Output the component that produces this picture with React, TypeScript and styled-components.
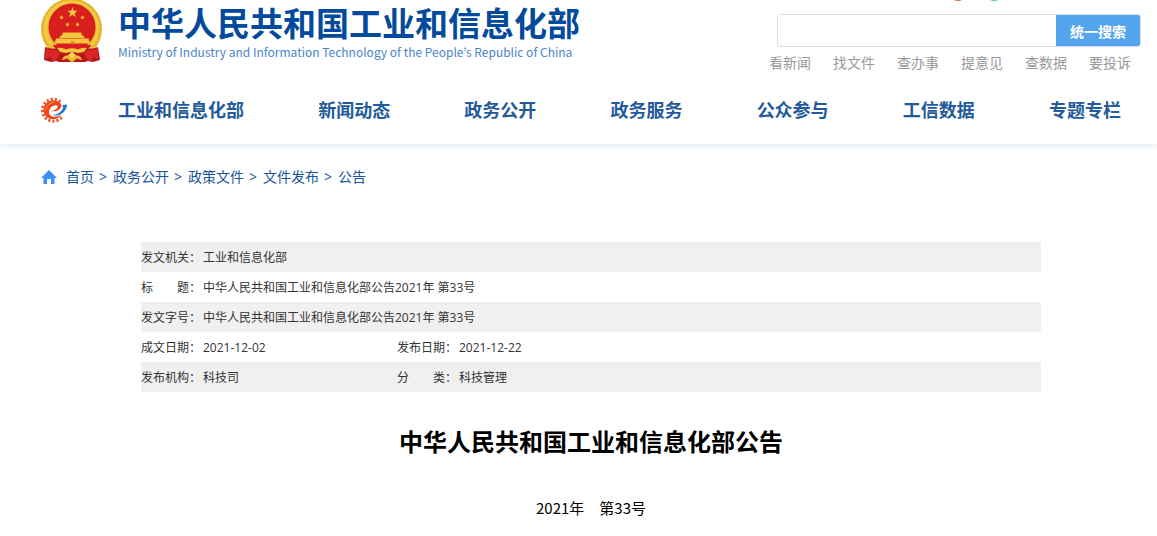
import React from "react";
import styled, { createGlobalStyle } from "styled-components";

const GlobalStyle = createGlobalStyle`
  *, *::before, *::after { box-sizing: border-box; }
  body {
    margin: 0;
    background: #fff;
    color: #333;
    font-family: "Open Sans", "Noto Sans CJK SC", sans-serif;
    font-size: 14px;
  }
  a { color: inherit; text-decoration: none; }
`;

const Header = styled.header`
  height: 144px;
  box-shadow: 0 1px 6px 1px #e3ebf2;
`;

const HeaderTop = styled.div`
  display: flex;
  justify-content: space-between;
  height: 76px;
  padding: 0 16px 0 40px;
`;

const Brand = styled.a`
  display: flex;
  gap: 14px;
  height: 64px;
  white-space: nowrap;
`;

const BrandText = styled.span`
  display: flex;
  flex-direction: column;
  font-family: "Noto Sans CJK SC", sans-serif;
`;

const BrandName = styled.span`
  font-size: 33px;
  font-weight: 700;
  line-height: 44px;
  color: #024a9c;
`;

const BrandEnglish = styled.span`
  font-family: "Noto Sans CJK KR", sans-serif;
  font-size: 12px;
  line-height: 16px;
  color: #4a84cc;
`;

const SearchArea = styled.div`
  display: flex;
  flex-direction: column;
  align-items: flex-end;
`;

const ShareMarks = styled.svg`
  width: 52px;
  height: 1px;
  margin: 0 139px 13px 0;
`;

const SearchForm = styled.form`
  display: flex;
  width: 364px;
  height: 33px;
  border: 1px solid #d3e0ea;
  border-radius: 3px;
  overflow: hidden;
`;

const SearchInput = styled.input`
  flex: 1;
  min-width: 0;
  border: 0;
  padding: 0 10px;
  font: inherit;
  outline: none;
`;

const SearchButton = styled.button`
  width: 84px;
  border: 0;
  padding: 0;
  background: #54a4ee;
  color: #fff;
  font: inherit;
  font-weight: 700;
`;

const QuickLinks = styled.div`
  display: flex;
  gap: 22px;
  margin: 6px 10px 0 0;
  line-height: 20px;
  color: #999;
`;

const NavBar = styled.nav`
  display: flex;
  align-items: center;
  height: 68px;
  padding: 0 36px 0 38px;
`;

const NavLogo = styled.a`
  display: flex;
  flex: 0 0 80px;
`;

const NavList = styled.ul`
  display: flex;
  flex: 1;
  justify-content: space-between;
  margin: 0;
  padding: 0;
  list-style: none;
  font-size: 18px;
  font-weight: 700;
  line-height: 26px;
  color: #235a9b;
  white-space: nowrap;
`;

const Main = styled.main`
  padding: 0 16px 0 41px;
`;

const Breadcrumb = styled.nav`
  display: flex;
  align-items: center;
  gap: 5px;
  padding-top: 23px;
  line-height: 20px;
  color: #1a559c;
`;

const HomeIcon = styled.svg`
  width: 16px;
  height: 14px;
  margin-right: 4px;
`;

const Separator = styled.span`
  width: 9px;
`;

const Article = styled.article`
  max-width: 900px;
  margin: 55px auto 0;
`;

const InfoTable = styled.table`
  width: 100%;
  table-layout: fixed;
  border-collapse: collapse;
  font-size: 12px;
  line-height: 20px;

  tr:nth-child(odd) { background: #f0f0f0; }
`;

const LabelCell = styled.th`
  padding: 6px 0 4px;
  font-weight: 400;
  text-align: left;
  white-space: pre;
`;

const ValueCell = styled.td`
  padding: 6px 0 4px;
`;

const Title = styled.h1`
  margin: 32px 0 0;
  font-size: 24px;
  line-height: 36px;
  text-align: center;
  color: #000;
`;

const IssueNumber = styled.p`
  margin: 36px 0 0;
  padding-bottom: 16px;
  font-family: "Noto Sans CJK SC", sans-serif;
  font-size: 15px;
  line-height: 24px;
  text-align: center;
  color: #000;
`;

const starPath = "M0-1 .24-.32.95-.31.38.12.59.81 0 .4-.59.81-.38.12-.95-.31-.24-.32Z";

function Emblem() {
  const stars = [
    { x: 32.5, y: 12.5, r: 5.5 },
    { x: 21.5, y: 17.5, r: 2.6 },
    { x: 42.5, y: 17.5, r: 2.6 },
    { x: 27.5, y: 24.5, r: 2.6 },
    { x: 37.5, y: 24.5, r: 2.6 },
  ];
  return (
    <svg width="64" height="64" viewBox="0 0 64 64" aria-hidden="true">
      <circle cx="31.5" cy="29" r="30.5" fill="#e9b92f" />
      <circle cx="31.5" cy="29" r="29.5" fill="none" stroke="#d9a42a" strokeWidth="1" strokeDasharray="2 2" />
      <circle cx="31.5" cy="28" r="26" fill="none" stroke="#f3cb42" strokeWidth="3" />
      <circle cx="32" cy="27" r="23.500" fill="#d81f1e" />
      {stars.map((s) => (
        <path key={`${s.x}-${s.y}`} d={starPath} fill="#f6c83c" transform={`translate(${s.x} ${s.y}) scale(${s.r})`} />
      ))}
      <path d="M23 32.500h18l1 3h1.500l1 2.500h-25l1-2.500H22zM16 38.500h32.500l1.500 5H14.500z" fill="#f4c73d" />
      <path d="M31 41h3v2.500h-3z" fill="#d8902a" />
      <path d="M12.500 45h39l-4 5h-31z" fill="#d81f1e" />
      <path d="M5 47q7 3 15 1l12 5 12-5q8 2 14-1l2 13-7 2-5-1-3 1H19l-3-1-5 1-7-2z" fill="#b9161a" />
      <path d="M6 48q5 3 11 2l3 4-6 8-4-6-4 4zM58 48q-5 3-11 2l-3 4 6 8 4-6 4 4z" fill="#d8282a" />
      <path d="M17 48q5-1 9 1.500 6-2.500 12 0 4-2.500 9-1.500l-3 4-6 1-6-1.500L26 53l-6-1z" fill="#f4c73d" />
      <path d="M22 60.500q1-5 5-5l5-3 5 3q4 0 5 5l-5-2-5 4-5-4z" fill="#ecb735" />
      <circle cx="32" cy="55" r="2.500" fill="#f8d95c" />
    </svg>
  );
}

function GearLogo() {
  return (
    <svg width="30" height="26" viewBox="0 0 30 26" aria-hidden="true">
      <path
        d="M22.500 4.800A11 11 0 1 0 24 20"
        fill="none"
        stroke="#ee5733"
        strokeWidth="3"
        strokeDasharray="2.200 1.900"
      />
      <path
        d="M15 3.500C9.500 3.500 5.500 7.800 5.500 13S9.500 22.300 15 22.300c3.500 0 6.500-1.600 8.500-4.500-5 2.600-9.800 2.400-11.500.1C9.500 14.800 12 9.500 16.500 8.500c2.300-.5 3.600.5 3 2-.7 1.800-3.500 3.300-7 3.600 5.800.9 10.500-1.500 10.800-5.100C23.500 5.700 19.500 3.500 15 3.500Z"
        fill="#ee4718"
      />
      <path d="M8 12.500c.5-4 3.800-7 8-7.200" fill="none" stroke="#fb9a58" strokeWidth="1" />
      <path d="M14 17.800c5 .6 10.300-3 11.300-8.300L23.500 9.700C25 8 27 7.200 29 7.500c.2 5.800-6.500 13.200-15 10.300Z" fill="#1f78c8" />
    </svg>
  );
}

const quickLinks = ["看新闻", "找文件", "查办事", "提意见", "查数据", "要投诉"];
const navItems = ["工业和信息化部", "新闻动态", "政务公开", "政务服务", "公众参与", "工信数据", "专题专栏"];
const crumbs = ["首页", "政务公开", "政策文件", "文件发布", "公告"];
const infoRows = [
  [["发文机关：", "工业和信息化部"]],
  [["标\u3000\u3000题：", "中华人民共和国工业和信息化部公告2021年 第33号"]],
  [["发文字号：", "中华人民共和国工业和信息化部公告2021年 第33号"]],
  [["成文日期：", "2021-12-02"], ["发布日期：", "2021-12-22"]],
  [["发布机构：", "科技司"], ["分\u3000\u3000类：", "科技管理"]],
];

export default function App() {
  return (
    <>
      <GlobalStyle />
      <Header>
        <HeaderTop>
          <Brand href="#">
            <Emblem />
            <BrandText>
              <BrandName>中华人民共和国工业和信息化部</BrandName>
              <BrandEnglish lang="en">Ministry of Industry and Information Technology of the People’s Republic of China</BrandEnglish>
            </BrandText>
          </Brand>
          <SearchArea>
            <ShareMarks viewBox="0 0 52 1" aria-hidden="true">
              <circle cx="8" cy="-7" r="8" fill="#fb5a43" />
              <circle cx="44" cy="-7" r="8" fill="#62c57a" />
            </ShareMarks>
            <SearchForm onSubmit={(e) => e.preventDefault()}>
              <SearchInput type="text" aria-label="搜索" />
              <SearchButton type="submit">统一搜索</SearchButton>
            </SearchForm>
            <QuickLinks>
              {quickLinks.map((text) => (
                <a key={text} href="#">{text}</a>
              ))}
            </QuickLinks>
          </SearchArea>
        </HeaderTop>
        <NavBar>
          <NavLogo href="#" aria-label="首页">
            <GearLogo />
          </NavLogo>
          <NavList>
            {navItems.map((text) => (
              <li key={text}><a href="#">{text}</a></li>
            ))}
          </NavList>
        </NavBar>
      </Header>
      <Main>
        <Breadcrumb>
          <HomeIcon viewBox="0 0 16 14" aria-hidden="true">
            <path d="M8 0 16 8h-2.500v6H10V9H6v5H2.500V8H0Z" fill="#3d8df5" />
          </HomeIcon>
          {crumbs.map((text, i) => (
            <React.Fragment key={text}>
              {i > 0 && <Separator>&gt;</Separator>}
              <a href="#">{text}</a>
            </React.Fragment>
          ))}
        </Breadcrumb>
        <Article>
          <InfoTable>
            <colgroup>
              <col width="62" />
              <col width="194" />
              <col width="62" />
              <col />
            </colgroup>
            <tbody>
              {infoRows.map((row) => (
                <tr key={row[0][0]}>
                  {row.map(([label, value]) => (
                    <React.Fragment key={label}>
                      <LabelCell scope="row">{label}</LabelCell>
                      <ValueCell colSpan={row.length === 1 ? 3 : 1}>{value}</ValueCell>
                    </React.Fragment>
                  ))}
                </tr>
              ))}
            </tbody>
          </InfoTable>
          <Title>中华人民共和国工业和信息化部公告</Title>
          <IssueNumber>2021年　第33号</IssueNumber>
        </Article>
      </Main>
    </>
  );
}
